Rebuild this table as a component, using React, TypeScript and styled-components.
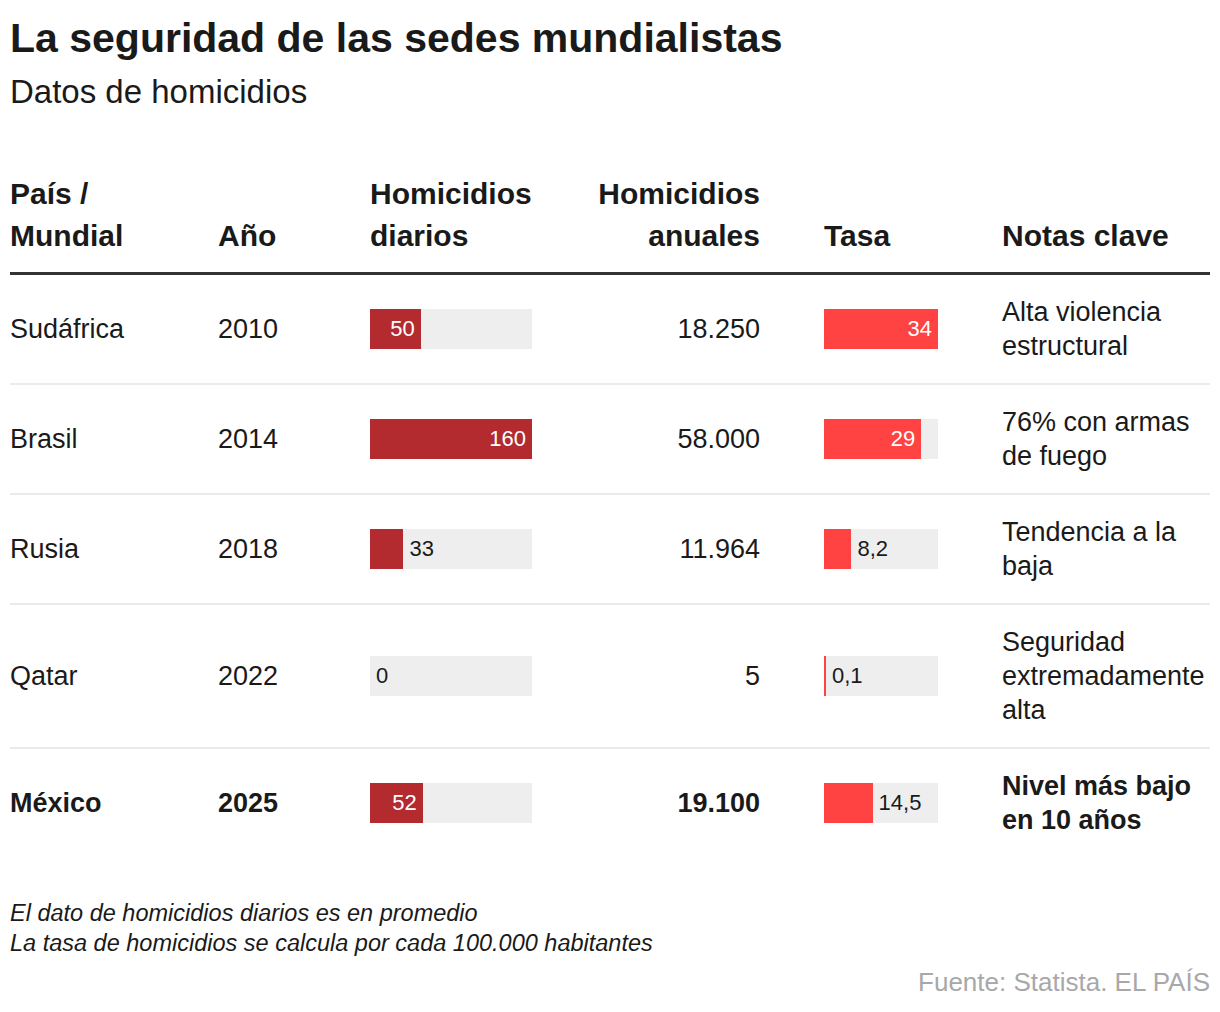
import React from "react";
import styled, { createGlobalStyle } from "styled-components";

const GlobalStyle = createGlobalStyle`
  body {
    margin: 0;
    background: #ffffff;
    font-family: "Liberation Sans", Arial, sans-serif;
    color: #1a1a1a;
  }
`;

const COLUMNS = "208px 152px 162px 228px 242px 208px";

const Page = styled.main`
  width: 1200px;
  padding: 14px 10px 0;
`;

const Title = styled.h1`
  margin: 0;
  font-size: 41px;
  line-height: 48px;
  font-weight: 700;
  color: #1a1a1a;
`;

const Subtitle = styled.h2`
  margin: 10px 0 0;
  font-size: 33px;
  line-height: 40px;
  font-weight: 400;
  color: #1a1a1a;
`;

const Table = styled.section`
  margin-top: 61px;
`;

const HeadRow = styled.div`
  display: grid;
  grid-template-columns: ${COLUMNS};
  align-items: end;
  padding-bottom: 15px;
  border-bottom: 3px solid #333333;
`;

const HeadCell = styled.div<{ $right?: boolean; $inset?: boolean }>`
  font-size: 30px;
  line-height: 42px;
  font-weight: 700;
  color: #1a1a1a;
  text-align: ${(p) => (p.$right ? "right" : "left")};
  padding-left: ${(p) => (p.$inset ? "64px" : "0")};
`;

const Row = styled.div<{ $last?: boolean }>`
  display: grid;
  grid-template-columns: ${COLUMNS};
  align-items: center;
  padding: 20px 0;
  border-bottom: ${(p) => (p.$last ? "none" : "2px solid #ebebeb")};
`;

const Cell = styled.div<{ $right?: boolean; $bold?: boolean }>`
  font-size: 27px;
  line-height: 34px;
  font-weight: ${(p) => (p.$bold ? 700 : 400)};
  text-align: ${(p) => (p.$right ? "right" : "left")};
  color: #1a1a1a;
`;

const BarCell = styled.div<{ $inset?: boolean }>`
  padding-left: ${(p) => (p.$inset ? "64px" : "0")};
`;

const Track = styled.div<{ $width: number }>`
  width: ${(p) => p.$width}px;
  height: 40px;
  background: #eeeeee;
  display: flex;
  align-items: center;
`;

const Fill = styled.div<{ $color: string }>`
  height: 100%;
  background: ${(p) => p.$color};
  display: flex;
  align-items: center;
  justify-content: flex-end;
  flex-shrink: 0;
`;

const Label = styled.span<{ $inside: boolean }>`
  font-size: 22px;
  line-height: 40px;
  color: ${(p) => (p.$inside ? "#ffffff" : "#1a1a1a")};
  padding: 0 6px;
  white-space: nowrap;
`;

const Notes = styled.footer`
  margin-top: 41px;
`;

const Note = styled.p`
  margin: 0;
  font-size: 23.5px;
  line-height: 30px;
  font-style: italic;
  color: #1a1a1a;
`;

const Source = styled.p`
  margin: 8px 0 0;
  font-size: 26px;
  line-height: 32px;
  text-align: right;
  color: #a8a8a8;
`;

interface BarProps {
  value: number;
  max: number;
  width: number;
  color: string;
  label: string;
}

const Bar: React.FC<BarProps> = ({ value, max, width, color, label }) => {
  const fill = Math.max((value / max) * width, value > 0 ? 2 : 0);
  const digits = label.replace(/[^0-9]/g, "").length;
  const commas = label.length - digits;
  const needed = digits * 12.2 + commas * 6 + 12;
  const inside = fill >= needed;
  return (
    <Track $width={width}>
      <Fill $color={color} style={{ width: fill }}>
        {inside && <Label $inside>{label}</Label>}
      </Fill>
      {!inside && <Label $inside={false}>{label}</Label>}
    </Track>
  );
};

const rows = [
  { pais: "Sudáfrica", anio: "2010", diarios: 50, anuales: "18.250", tasa: 34, tasaLabel: "34", nota: "Alta violencia estructural" },
  { pais: "Brasil", anio: "2014", diarios: 160, anuales: "58.000", tasa: 29, tasaLabel: "29", nota: "76% con armas de fuego" },
  { pais: "Rusia", anio: "2018", diarios: 33, anuales: "11.964", tasa: 8.2, tasaLabel: "8,2", nota: "Tendencia a la baja" },
  { pais: "Qatar", anio: "2022", diarios: 0, anuales: "5", tasa: 0.1, tasaLabel: "0,1", nota: "Seguridad extremadamente alta" },
  { pais: "México", anio: "2025", diarios: 52, anuales: "19.100", tasa: 14.5, tasaLabel: "14,5", nota: "Nivel más bajo en 10 años", bold: true },
];

const App: React.FC = () => {
  return (
    <Page>
      <GlobalStyle />
      <Title>La seguridad de las sedes mundialistas</Title>
      <Subtitle>Datos de homicidios</Subtitle>

      <Table>
        <HeadRow>
          <HeadCell>
            País /<br />
            Mundial
          </HeadCell>
          <HeadCell>Año</HeadCell>
          <HeadCell>
            Homicidios
            <br />
            diarios
          </HeadCell>
          <HeadCell $right>
            Homicidios
            <br />
            anuales
          </HeadCell>
          <HeadCell $inset>Tasa</HeadCell>
          <HeadCell>Notas clave</HeadCell>
        </HeadRow>

        {rows.map((r, i) => (
          <Row key={r.pais} $last={i === rows.length - 1}>
            <Cell $bold={r.bold}>{r.pais}</Cell>
            <Cell $bold={r.bold}>{r.anio}</Cell>
            <BarCell>
              <Bar value={r.diarios} max={160} width={162} color="#b32b2f" label={String(r.diarios)} />
            </BarCell>
            <Cell $right $bold={r.bold}>
              {r.anuales}
            </Cell>
            <BarCell $inset>
              <Bar value={r.tasa} max={34} width={114} color="#ff4242" label={r.tasaLabel} />
            </BarCell>
            <Cell $bold={r.bold}>{r.nota}</Cell>
          </Row>
        ))}
      </Table>

      <Notes>
        <Note>El dato de homicidios diarios es en promedio</Note>
        <Note>La tasa de homicidios se calcula por cada 100.000 habitantes</Note>
        <Source>Fuente: Statista. EL PAÍS</Source>
      </Notes>
    </Page>
  );
};

export default App;
